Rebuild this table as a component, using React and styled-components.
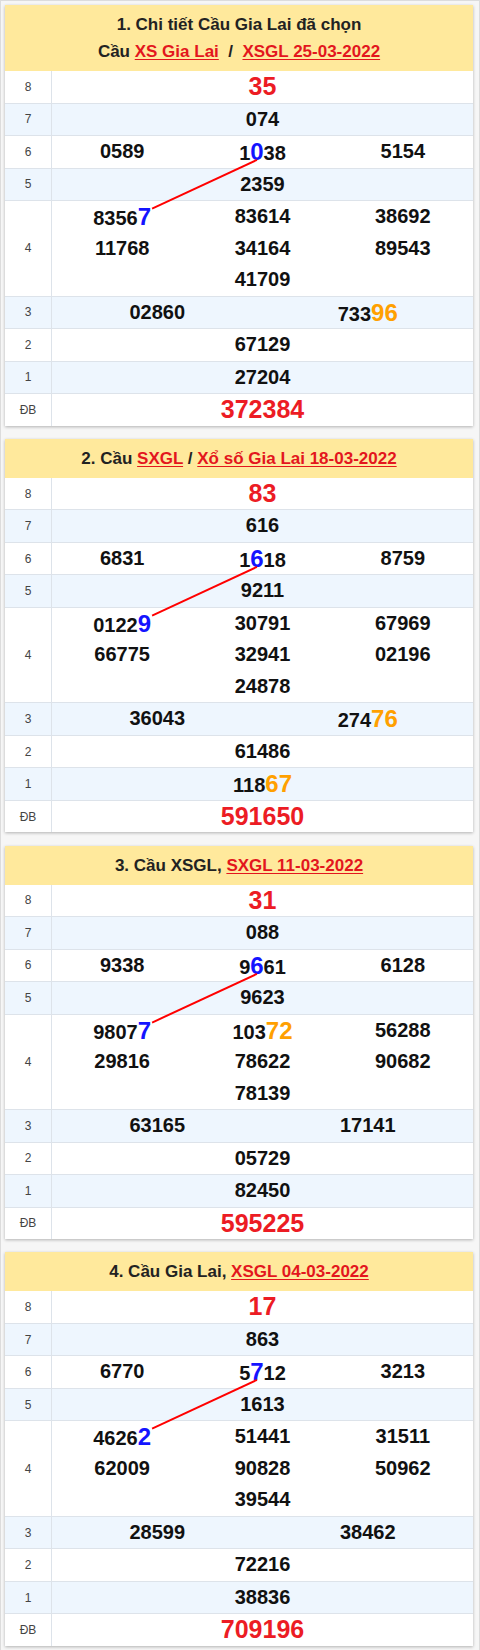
import React, { useLayoutEffect, useRef, useState } from 'react';
import styled, { createGlobalStyle } from 'styled-components';

const GlobalStyle = createGlobalStyle`
  html, body {
    margin: 0;
    padding: 0;
    background: #ffffff;
  }
  body {
    font-family: "Liberation Sans", Arial, sans-serif;
  }
`;

const Page = styled.div`
  box-sizing: border-box;
  width: 480px;
  min-height: 1650px;
  border: 1px solid #dcdcdc;
  border-bottom: none;
  background: #f6f6f6;
  padding: 4px 6px 0 4px;
  display: flex;
  flex-direction: column;
  gap: 13.3px;
`;

const Card = styled.div`
  background: #fff;
  box-shadow: 0 1px 3px rgba(0, 0, 0, 0.28);
`;

const Header = styled.div`
  background: #ffe99c;
  text-align: center;
  font-size: 17px;
  font-weight: bold;
  color: #222;
  line-height: 27px;
  padding: 6px 4px 6px;
`;

const HeaderLink = styled.a`
  color: #e3161d;
  text-decoration: underline;
  text-underline-offset: 2px;
`;

const Body = styled.div`
  position: relative;
`;

const Row = styled.div`
  display: flex;
  background: ${(p) => (p.$alt ? '#eef6fe' : '#ffffff')};
  & + & {
    border-top: 1px solid #dde3ea;
  }
`;

const Label = styled.div`
  width: 46px;
  flex-shrink: 0;
  border-right: 1px solid #dde3ea;
  display: flex;
  align-items: center;
  justify-content: center;
  font-size: 12px;
  color: #444;
`;

const Cells = styled.div`
  flex: 1;
  display: grid;
  grid-template-columns: repeat(${(p) => p.$cols}, 1fr);
`;

const Num = styled.div`
  text-align: center;
  font-size: ${(p) => (p.$special ? '25px' : '20px')};
  font-weight: bold;
  line-height: 31.5px;
  height: 31.5px;
  color: ${(p) => (p.$special ? '#ec1c24' : '#111')};
  white-space: nowrap;
`;

const Mark = styled.span`
  font-size: 24px;
  color: ${(p) => (p.$tone === 'blue' ? '#1414ff' : '#ffa000')};
`;

const Overlay = styled.svg`
  position: absolute;
  left: 0;
  top: 0;
  width: 100%;
  height: 100%;
  pointer-events: none;
  overflow: visible;
`;

const cards = [
  {
    title: [
      ['1. Chi tiết Cầu Gia Lai đã chọn'],
      ['Cầu ', { link: 'XS Gia Lai' }, '\u00a0 /\u00a0 ', { link: 'XSGL 25-03-2022' }],
    ],
    rows: {
      8: ['35'],
      7: ['074'],
      6: ['0589', '1[0]38', '5154'],
      5: ['2359'],
      4: ['8356[7]', '83614', '38692', '11768', '34164', '89543', '41709'],
      3: ['02860', '733{96}'],
      2: ['67129'],
      1: ['27204'],
      DB: ['372384'],
    },
  },
  {
    title: [['2. Cầu ', { link: 'SXGL' }, ' / ', { link: 'Xổ số Gia Lai 18-03-2022' }]],
    rows: {
      8: ['83'],
      7: ['616'],
      6: ['6831', '1[6]18', '8759'],
      5: ['9211'],
      4: ['0122[9]', '30791', '67969', '66775', '32941', '02196', '24878'],
      3: ['36043', '274{76}'],
      2: ['61486'],
      1: ['118{67}'],
      DB: ['591650'],
    },
  },
  {
    title: [['3. Cầu XSGL, ', { link: 'SXGL 11-03-2022' }]],
    rows: {
      8: ['31'],
      7: ['088'],
      6: ['9338', '9[6]61', '6128'],
      5: ['9623'],
      4: ['9807[7]', '103{72}', '56288', '29816', '78622', '90682', '78139'],
      3: ['63165', '17141'],
      2: ['05729'],
      1: ['82450'],
      DB: ['595225'],
    },
  },
  {
    title: [['4. Cầu Gia Lai, ', { link: 'XSGL 04-03-2022' }]],
    rows: {
      8: ['17'],
      7: ['863'],
      6: ['6770', '5[7]12', '3213'],
      5: ['1613'],
      4: ['4626[2]', '51441', '31511', '62009', '90828', '50962', '39544'],
      3: ['28599', '38462'],
      2: ['72216'],
      1: ['38836'],
      DB: ['709196'],
    },
  },
];

const order = ['8', '7', '6', '5', '4', '3', '2', '1', 'DB'];

const layoutRow = (key, nums) => {
  if (key === '6') return { cols: 3, items: nums };
  if (key === '3') return { cols: 2, items: nums };
  if (key === '4') return { cols: 3, items: [...nums.slice(0, 6), null, nums[6], null] };
  return { cols: 1, items: nums };
};

const NumberText = ({ value, markRef }) =>
  value.split(/(\[[^\]]+\]|\{[^}]+\})/).filter(Boolean).map((part, i) => {
    if (part.startsWith('['))
      return (
        <Mark key={i} $tone='blue' ref={markRef}>
          {part.slice(1, -1)}
        </Mark>
      );
    if (part.startsWith('{'))
      return (
        <Mark key={i} $tone='orange'>
          {part.slice(1, -1)}
        </Mark>
      );
    return <React.Fragment key={i}>{part}</React.Fragment>;
  });

const ResultCard = ({ card }) => {
  const bodyRef = useRef(null);
  const marks = useRef([]);
  const [line, setLine] = useState(null);

  useLayoutEffect(() => {
    const measure = () => {
      const [top, bottom] = marks.current;
      if (!bodyRef.current || !top || !bottom) return;
      const base = bodyRef.current.getBoundingClientRect();
      const a = top.getBoundingClientRect();
      const b = bottom.getBoundingClientRect();
      setLine({
        x1: a.left - base.left + a.width * 0.5,
        y1: a.bottom - base.top - 24 * 0.212,
        x2: b.right - base.left + 1,
        y2: b.top - base.top + 24 * 0.189 + 1,
      });
    };
    measure();
    if (document.fonts) document.fonts.ready.then(measure);
  }, []);

  let markIndex = 0;
  const markRef = () => {
    const idx = markIndex++;
    return (el) => {
      marks.current[idx] = el;
    };
  };

  return (
    <Card>
      <Header>
        {card.title.map((ln, i) => (
          <div key={i}>
            {ln.map((part, j) =>
              typeof part === 'string' ? (
                <React.Fragment key={j}>{part}</React.Fragment>
              ) : (
                <HeaderLink key={j}>{part.link}</HeaderLink>
              )
            )}
          </div>
        ))}
      </Header>
      <Body ref={bodyRef}>
        {order.map((key, r) => {
          const { cols, items } = layoutRow(key, card.rows[key]);
          return (
            <Row key={key} $alt={r % 2 === 1}>
              <Label>{key === 'DB' ? 'ĐB' : key}</Label>
              <Cells $cols={cols}>
                {items.map((n, i) => (
                  <Num key={i} $special={key === '8' || key === 'DB'}>
                    {n && <NumberText value={n} markRef={n.includes('[') ? markRef() : undefined} />}
                  </Num>
                ))}
              </Cells>
            </Row>
          );
        })}
        {line && (
          <Overlay>
            <line {...line} stroke='#ff0000' strokeWidth='2' />
          </Overlay>
        )}
      </Body>
    </Card>
  );
};

const App = () => (
  <>
    <GlobalStyle />
    <Page>
      {cards.map((card, i) => (
        <ResultCard key={i} card={card} />
      ))}
    </Page>
  </>
);

export default App;
